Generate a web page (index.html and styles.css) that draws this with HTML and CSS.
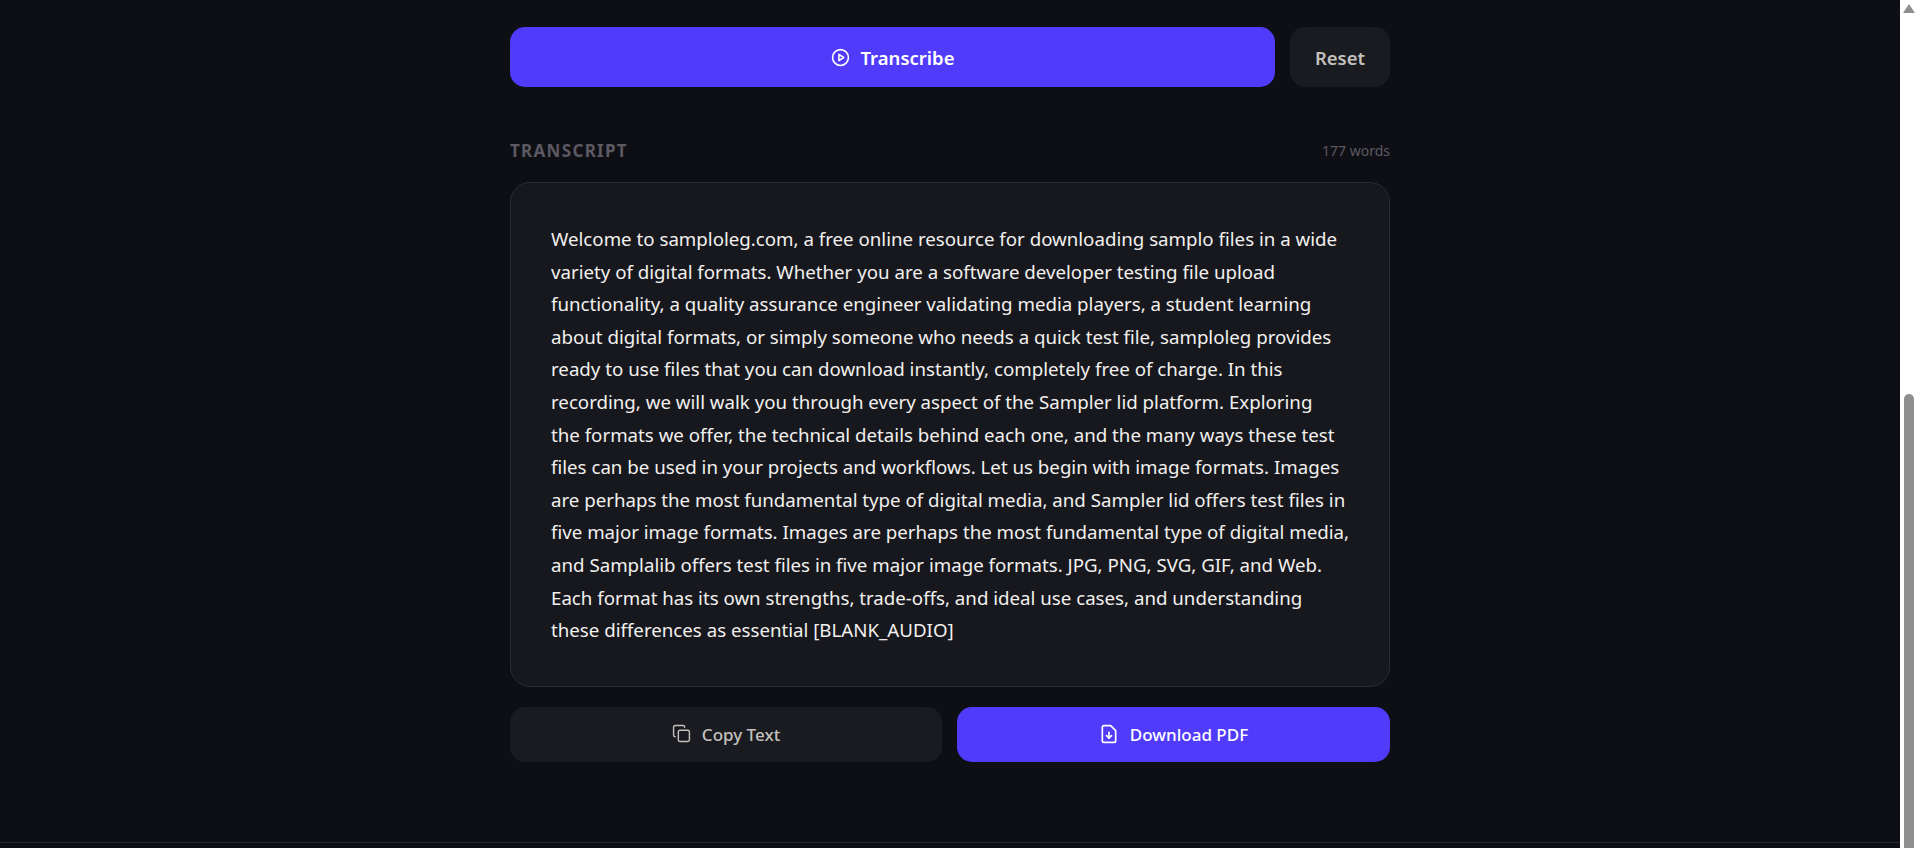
FILE: index.html
```html
<!DOCTYPE html>
<html lang="en">
<head>
    <meta charset="UTF-8">
    <meta name="viewport" content="width=device-width, initial-scale=1.0">
    <title>Transcribe</title>
    <link rel="stylesheet" href="styles.css">
</head>
<body>
    <main class="page">
        <div class="content">
            <div class="actions">
                <button class="btn btn-primary btn-grow btn-large">
                    <svg class="icon" viewBox="0 0 24 24" fill="none" stroke="currentColor" stroke-width="2" stroke-linecap="round" stroke-linejoin="round"><circle cx="12" cy="12" r="10"/><polygon points="10 8 16 12 10 16 10 8"/></svg>
                    Transcribe
                </button>
                <button class="btn btn-secondary btn-reset btn-large">Reset</button>
            </div>

            <div class="transcript-head">
                <h2 class="transcript-title">TRANSCRIPT</h2>
                <span class="word-count">177 words</span>
            </div>

            <div class="transcript-card">
                <p class="transcript-text">Welcome to samploleg.com, a free online resource for downloading samplo files in a wide<br>
variety of digital formats. Whether you are a software developer testing file upload<br>
functionality, a quality assurance engineer validating media players, a student learning<br>
about digital formats, or simply someone who needs a quick test file, samploleg provides<br>
ready to use files that you can download instantly, completely free of charge. In this<br>
recording, we will walk you through every aspect of the Sampler lid platform. Exploring<br>
the formats we offer, the technical details behind each one, and the many ways these test<br>
files can be used in your projects and workflows. Let us begin with image formats. Images<br>
are perhaps the most fundamental type of digital media, and Sampler lid offers test files in<br>
five major image formats. Images are perhaps the most fundamental type of digital media,<br>
and Samplalib offers test files in five major image formats. JPG, PNG, SVG, GIF, and Web.<br>
Each format has its own strengths, trade-offs, and ideal use cases, and understanding<br>
these differences as essential [BLANK_AUDIO]</p>
            </div>

            <div class="export-row">
                <button class="btn btn-secondary">
                    <svg class="icon icon-copy" viewBox="0 0 24 24" fill="none" stroke="currentColor" stroke-width="2" stroke-linecap="round" stroke-linejoin="round"><rect x="8" y="8" width="14" height="14" rx="2" ry="2"/><path d="M4 16c-1.1 0-2-.9-2-2V4c0-1.1.9-2 2-2h10c1.1 0 2 .9 2 2"/></svg>
                    Copy Text
                </button>
                <button class="btn btn-primary">
                    <svg class="icon icon-file" viewBox="0 0 24 24" fill="none" stroke="currentColor" stroke-width="2" stroke-linecap="round" stroke-linejoin="round"><path d="M14 2H6a2 2 0 0 0-2 2v16a2 2 0 0 0 2 2h12a2 2 0 0 0 2-2V8z"/><path d="M12 10v7"/><path d="m9 14 3 3 3-3"/></svg>
                    Download PDF
                </button>
            </div>
        </div>
        <footer class="page-foot"></footer>
    </main>

    <div class="scrollbar">
        <svg class="scroll-arrow" viewBox="0 0 12 9"><polygon points="6 0 12 9 0 9"/></svg>
        <div class="scroll-thumb"></div>
    </div>
</body>
</html>
```

FILE: styles.css
```css
html,
body {
    height: 100%;
}

body {
    margin: 0;
    display: flex;
    height: 848px;
    overflow: hidden;
    background-color: #0e0f14;
    font-family: 'Noto Sans', 'Open Sans', sans-serif;
}

.page {
    flex: 1;
    display: flex;
    flex-direction: column;
    min-width: 0;
}

.content {
    flex: 1;
    width: 880px;
    margin: 0 auto;
    padding-top: 27px;
}

.actions {
    display: flex;
    gap: 15px;
}

.btn {
    display: flex;
    align-items: center;
    justify-content: center;
    gap: 11px;
    height: 55px;
    border: none;
    border-radius: 15px;
    font-family: inherit;
    font-size: 17px;
    font-weight: 500;
    cursor: pointer;
}

.btn-large {
    height: 60px;
    font-size: 18.5px;
    font-weight: 600;
}

.btn-primary {
    background-color: #503bfa;
    color: #ffffff;
}

.btn-secondary {
    background-color: #1a1b20;
    color: #c4c1bd;
}

.btn-grow {
    flex: 1;
}

.btn-reset {
    width: 100px;
}

.icon {
    width: 19px;
    height: 19px;
    flex-shrink: 0;
}

.icon-copy {
    margin-top: -2px;
    stroke-width: 1.8;
}

.icon-file {
    width: 20px;
    height: 20px;
    margin-top: -2px;
}

.transcript-head {
    display: flex;
    justify-content: space-between;
    align-items: center;
    margin-top: 51px;
    height: 24px;
}

.transcript-title {
    margin: 0;
    font-size: 17px;
    font-weight: 700;
    letter-spacing: 1.3px;
    color: #5c5963;
}

.word-count {
    font-size: 14px;
    color: #5c5963;
}

.transcript-card {
    box-sizing: border-box;
    height: 505px;
    margin-top: 20px;
    padding: 40px;
    background-color: #17181e;
    border: 1px solid #2b2c33;
    border-radius: 20px;
}

.transcript-text {
    margin: 0;
    font-size: 18.7px;
    line-height: 32.6px;
    color: #f2f0ee;
    white-space: nowrap;
}

.export-row {
    display: grid;
    grid-template-columns: 432fr 433fr;
    gap: 15px;
    margin-top: 20px;
}

.page-foot {
    height: 5px;
    border-top: 1px solid #26272d;
}

.scrollbar {
    box-sizing: border-box;
    width: 17px;
    padding-left: 1px;
    background-color: #ffffff;
    display: flex;
    flex-direction: column;
    align-items: center;
}

.scroll-arrow {
    width: 12px;
    height: 9px;
    margin-top: 4px;
    fill: #8f8f8f;
}

.scroll-thumb {
    width: 10px;
    flex: 1;
    margin-top: 381px;
    background-color: #8f8f8f;
    border-radius: 5px 5px 0 0;
}
```
